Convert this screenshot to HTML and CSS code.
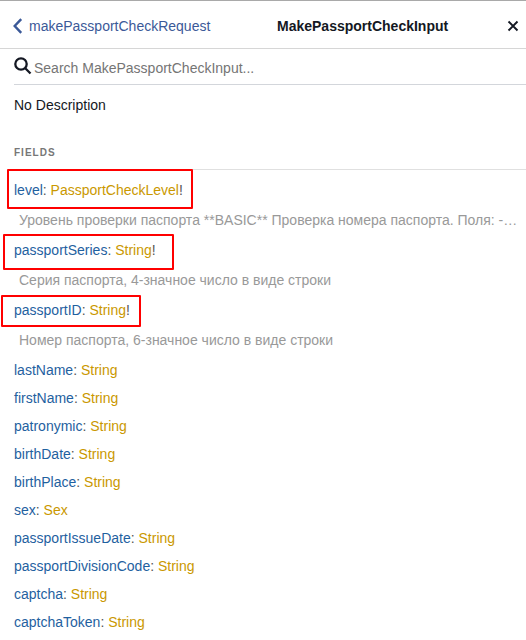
FILE: index.html
```
<!DOCTYPE html>
<html lang="en">
<head>
<meta charset="utf-8">
<title>MakePassportCheckInput</title>
<link rel="stylesheet" href="styles.css">
</head>
<body>
<header class="title-bar">
  <a class="back"><svg class="chevron" viewBox="0 0 10 16"><path d="M8.2 1.2 1.7 8 8.2 14.8"/></svg>makePassportCheckRequest</a>
  <h1 class="title">MakePassportCheckInput</h1>
  <svg class="close" viewBox="0 0 12 12"><path d="M1.5 1.5 10.5 10.5M10.5 1.5 1.5 10.5"/></svg>
</header>
<main class="content">
  <label class="search">
    <svg class="search-icon" viewBox="0 0 18 18"><circle cx="7" cy="7" r="5.7"/><path d="M11 11 16.5 16.5"/></svg>
    <span>Search MakePassportCheckInput...</span>
  </label>
  <p class="description">No Description</p>
  <h2 class="category">FIELDS</h2>
  <div class="field"><span class="name">level</span>: <span class="type">PassportCheckLevel</span>!<i class="mark mark-level"></i></div>
  <p class="note">Уровень проверки паспорта **BASIC** Проверка номера паспорта. Поля: -…</p>
  <div class="field"><span class="name">passportSeries</span>: <span class="type">String</span>!<i class="mark mark-series"></i></div>
  <p class="note">Серия паспорта, 4-значное число в виде строки</p>
  <div class="field"><span class="name">passportID</span>: <span class="type">String</span>!<i class="mark mark-id"></i></div>
  <p class="note">Номер паспорта, 6-значное число в виде строки</p>
  <div class="field"><span class="name">lastName</span>: <span class="type">String</span></div>
  <div class="field"><span class="name">firstName</span>: <span class="type">String</span></div>
  <div class="field"><span class="name">patronymic</span>: <span class="type">String</span></div>
  <div class="field"><span class="name">birthDate</span>: <span class="type">String</span></div>
  <div class="field"><span class="name">birthPlace</span>: <span class="type">String</span></div>
  <div class="field"><span class="name">sex</span>: <span class="type">Sex</span></div>
  <div class="field"><span class="name">passportIssueDate</span>: <span class="type">String</span></div>
  <div class="field"><span class="name">passportDivisionCode</span>: <span class="type">String</span></div>
  <div class="field"><span class="name">captcha</span>: <span class="type">String</span></div>
  <div class="field"><span class="name">captchaToken</span>: <span class="type">String</span></div>
</main>
</body>
</html>
```
FILE: styles.css
```
* { box-sizing: border-box; }
body {
  margin: 0;
  height: 640px;
  overflow: hidden;
  background: #fff;
  border-top: 1px solid #a9a9a9;
  color: #141823;
  font: 14px/20px "Liberation Sans", Arial, sans-serif;
}
.title-bar {
  display: flex;
  align-items: center;
  height: 48px;
  padding: 2px 7px 0 13px;
  border-bottom: 1px solid #d6d6d6;
}
.back {
  display: flex;
  align-items: center;
  width: 213px;
  color: #3b5998;
}
.chevron {
  width: 10px;
  height: 16px;
  margin: 1px 6px 0 0;
  fill: none;
  stroke: #3b5998;
  stroke-width: 2.4;
}
.title {
  flex: 1;
  margin: 0 0 0 51px;
  font-size: 14px;
}
.close {
  width: 12px;
  height: 12px;
  margin-top: 1px;
  fill: none;
  stroke: #141823;
  stroke-width: 1.9;
}
.content { padding-left: 14px; }
.search {
  display: flex;
  align-items: center;
  height: 36px;
  padding-top: 2px;
  border-bottom: 1px solid #d3d6db;
  color: #757575;
}
.search-icon {
  width: 18px;
  height: 18px;
  margin: -4px 2px 0 0;
  fill: none;
  stroke: #141823;
  stroke-width: 2.3;
}
.description { margin: 10px 0 0; }
.category {
  height: 32px;
  margin: 23px 0 10px;
  padding-top: 5px;
  border-bottom: 1px solid #e0e0e0;
  color: #777;
  font-size: 10px;
  letter-spacing: 1px;
}
.field {
  position: relative;
  width: max-content;
  margin-bottom: 8px;
  color: #555;
}
.name { color: #1f61a0; }
.type { color: #ca9800; }
.note {
  margin: 0 0 10px 5px;
  padding-top: 2px;
  color: #999;
  white-space: nowrap;
}
.mark {
  position: absolute;
  border: 2px solid #f00;
  border-radius: 1px;
}
.mark-level { left: -7px; top: -11px; width: 186px; height: 40px; }
.mark-series { left: -11px; top: -6px; width: 171px; height: 36px; }
.mark-id { left: -13px; top: -5px; width: 140px; height: 32px; }
```
